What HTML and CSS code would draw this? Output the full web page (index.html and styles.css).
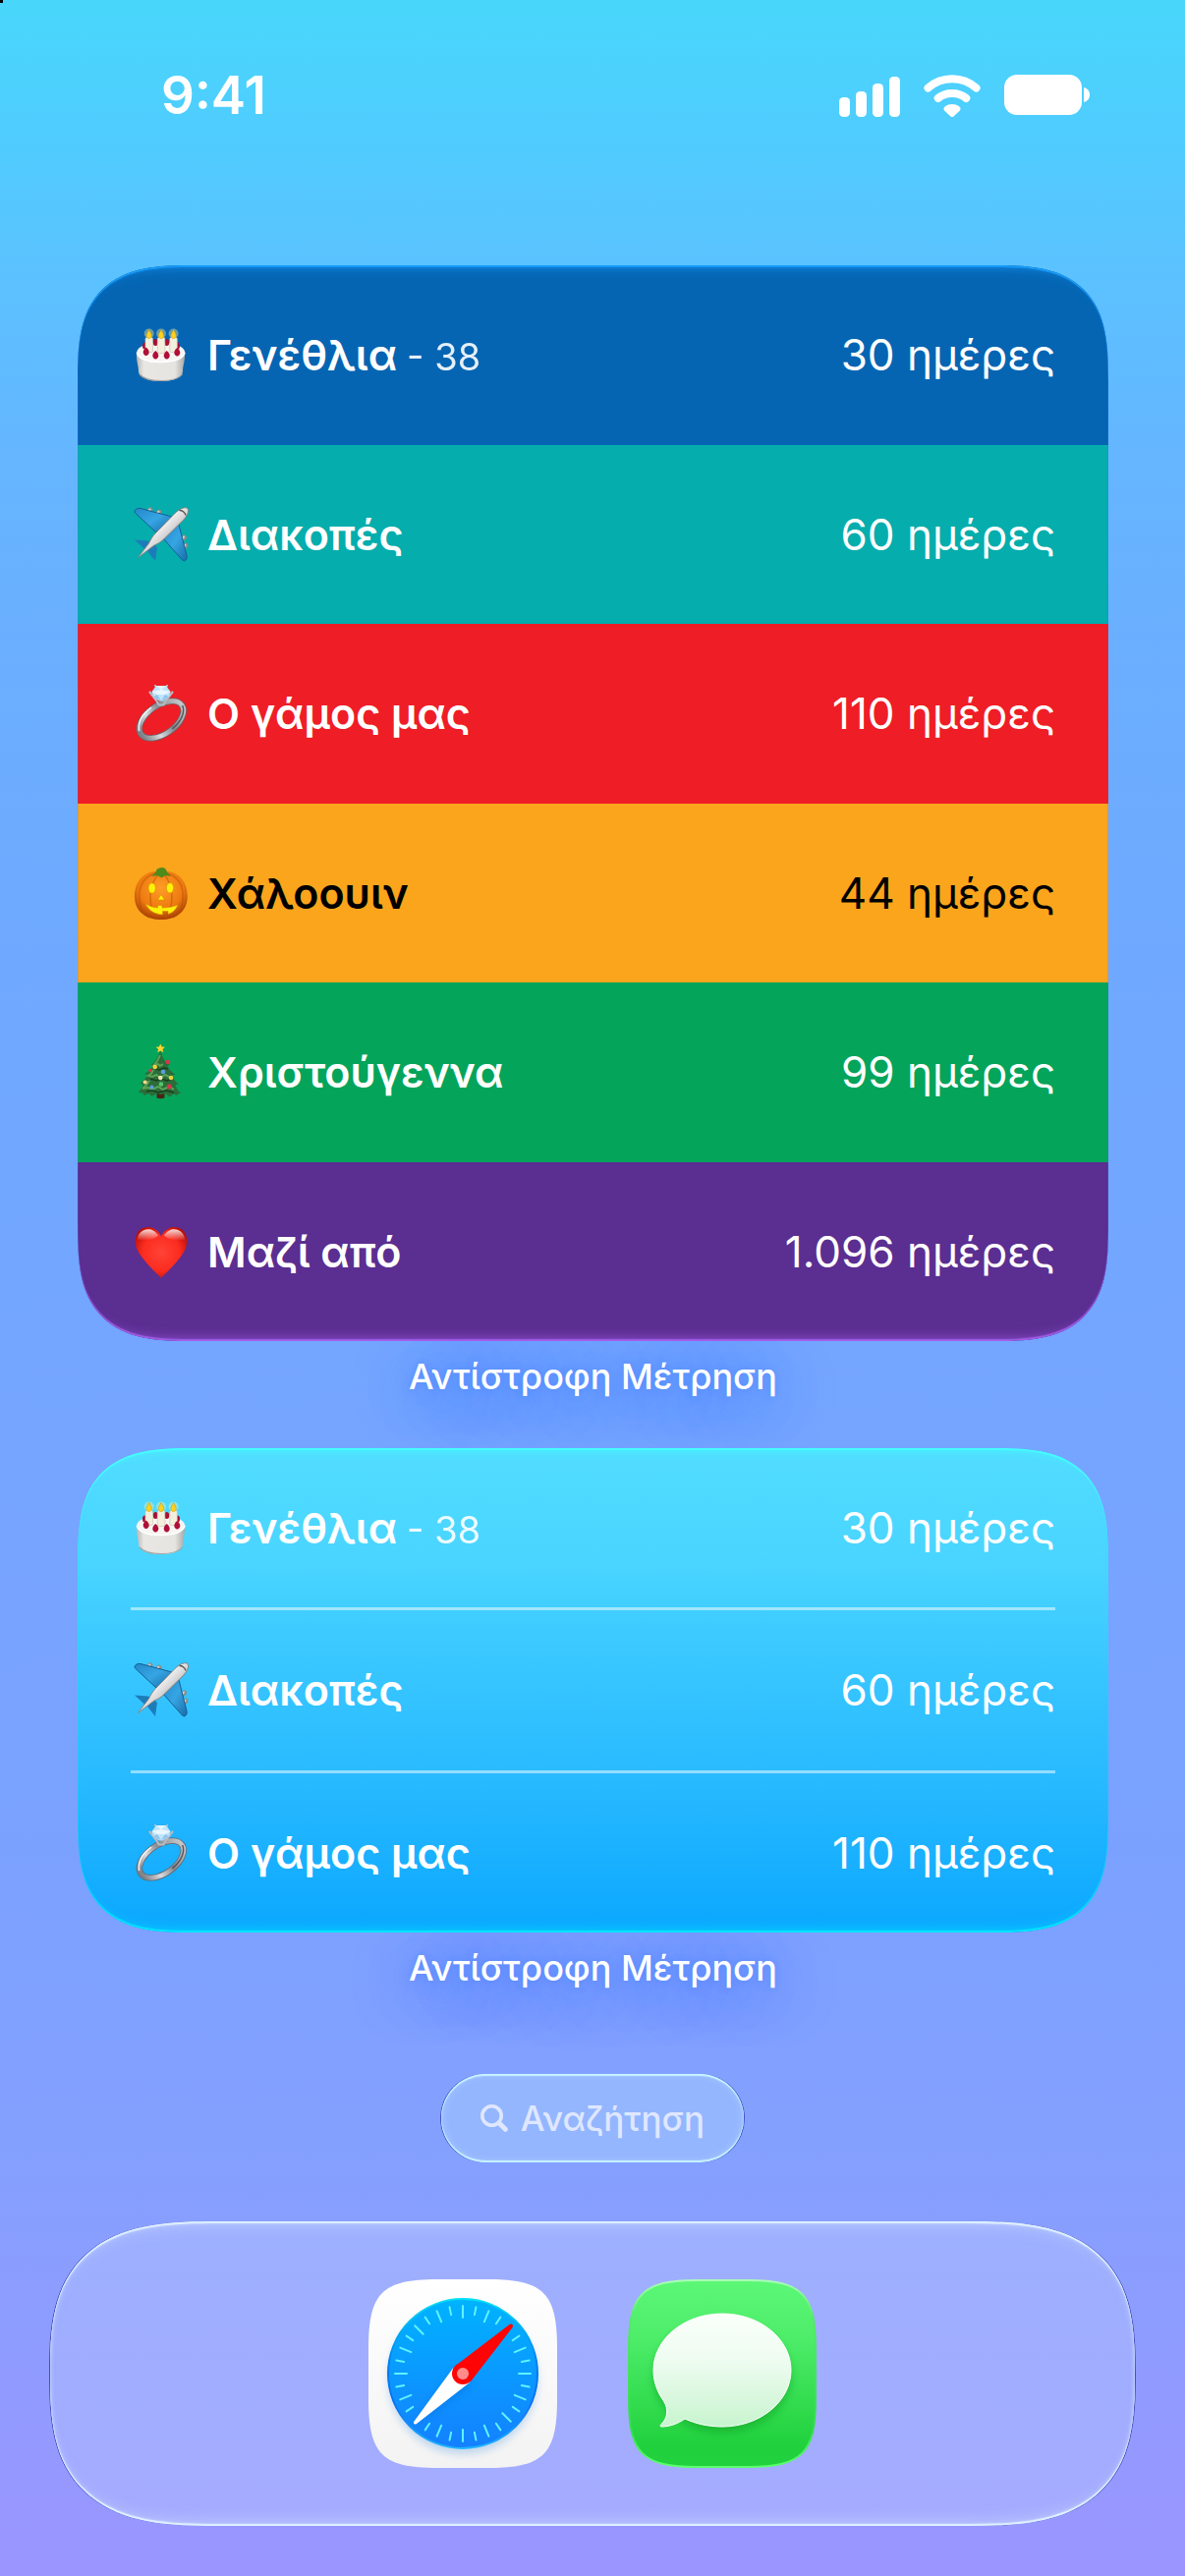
FILE: index.html
```html
<!DOCTYPE html>
<html lang="el">
<head>
    <meta charset="UTF-8">
    <meta name="viewport" content="width=device-width, initial-scale=1.0">
    <title>Αντίστροφη Μέτρηση</title>
    <link rel="stylesheet" href="styles.css">
</head>
<body>
    <!-- Emoji -->
    <svg class="sprite" aria-hidden="true">
        <defs>
            <linearGradient id="cake-side" x1="0" x2="1" y1="0" y2="0">
                <stop offset="0" stop-color="#b9b7b4"/>
                <stop offset=".15" stop-color="#e9e7e4"/>
                <stop offset=".8" stop-color="#e6e4e1"/>
                <stop offset="1" stop-color="#aaa8a5"/>
            </linearGradient>
            <linearGradient id="plane-body" x1="0" x2="1" y1="0" y2="1">
                <stop offset=".35" stop-color="#ffffff"/>
                <stop offset=".55" stop-color="#d5d3d3"/>
                <stop offset=".7" stop-color="#77716f"/>
            </linearGradient>
            <linearGradient id="plane-wing" x1="0" x2="1" y1="0" y2="1">
                <stop offset="0" stop-color="#2388c8"/>
                <stop offset=".5" stop-color="#36a5e4"/>
                <stop offset="1" stop-color="#186ca8"/>
            </linearGradient>
            <linearGradient id="ring-band" x1="0" x2="1" y1="0" y2="0">
                <stop offset="0" stop-color="#7d8086"/>
                <stop offset=".3" stop-color="#d9dbdf"/>
                <stop offset=".6" stop-color="#85878d"/>
                <stop offset="1" stop-color="#c3c5c9"/>
            </linearGradient>
            <radialGradient id="pumpkin-skin" cx=".5" cy=".35" r=".65">
                <stop offset="0" stop-color="#ff9d26"/>
                <stop offset=".65" stop-color="#ee7a10"/>
                <stop offset="1" stop-color="#a83f04"/>
            </radialGradient>
            <radialGradient id="heart-fill" cx=".5" cy=".5" r=".6">
                <stop offset="0" stop-color="#ff4336"/>
                <stop offset=".6" stop-color="#fb2c20"/>
                <stop offset="1" stop-color="#b80d06"/>
            </radialGradient>
            <linearGradient id="heart-shine" x1="0" x2="0" y1="0" y2="1">
                <stop offset="0" stop-color="#fff" stop-opacity=".85"/>
                <stop offset="1" stop-color="#fff" stop-opacity="0"/>
            </linearGradient>
        </defs>

        <symbol id="cake" viewBox="0 0 62 62">
            <path d="M6 28v4c0 7 2 10 2 16 0 6 10 10 23 10s22-4 22-10c0-6 2-9 2-16v-4z" fill="url(#cake-side)"/>
            <ellipse cx="30.700" cy="28.500" rx="24.500" ry="10" fill="#f6f5f3"/>
            <path d="M6.200 29c2 6 11 9.500 24.500 9.500S53 35 55.200 29" fill="none" stroke="#fff" stroke-width="1.500"/>
            <path d="M9 51c4 4.500 12 6.500 22 6.500S49 55.500 52.500 51" fill="none" stroke="#a5a3a0" stroke-width="1.200"/>
            <g fill="#a80f35">
                <ellipse cx="14.500" cy="22" rx="2.500" ry="3.500"/>
                <ellipse cx="25.300" cy="18.500" rx="2.500" ry="3.500"/>
                <ellipse cx="36.700" cy="18.500" rx="2.500" ry="3.500"/>
                <ellipse cx="47.500" cy="22" rx="2.500" ry="3.500"/>
            </g>
            <g fill="#f3efdc" stroke="#c9c3ac" stroke-width=".6">
                <rect x="15" y="13.500" width="7.500" height="15" rx="1.500"/>
                <rect x="27.300" y="13.500" width="7.500" height="16" rx="1.500"/>
                <rect x="39.800" y="13.500" width="7.500" height="15" rx="1.500"/>
            </g>
            <g fill="#fff3a0" opacity=".4">
                <circle cx="18.700" cy="9.500" r="5"/>
                <circle cx="31" cy="9.500" r="5"/>
                <circle cx="43.600" cy="9.500" r="5"/>
            </g>
            <g fill="#ffd21f" stroke="#d39c0b" stroke-width=".6">
                <path d="M18.700 5.500c1 2.500 2.600 4 2.600 6s-1 3-2.600 3-2.600-1-2.600-3 1.600-3.500 2.600-6z"/>
                <path d="M31 5.500c1 2.500 2.600 4 2.600 6s-1 3-2.600 3-2.600-1-2.600-3 1.600-3.500 2.600-6z"/>
                <path d="M43.600 5.500c1 2.500 2.600 4 2.600 6s-1 3-2.600 3-2.600-1-2.600-3 1.600-3.500 2.600-6z"/>
            </g>
            <g fill="#b00f38">
                <path d="M15.700 23.500c2 1.500 3 3.500 3 5s-1.200 3.500-3 3.500-3-2-3-3.500 1-3.500 3-5z"/>
                <path d="M25.300 27c2 1.500 3 3.500 3 5s-1.200 3.500-3 3.500-3-2-3-3.500 1-3.500 3-5z"/>
                <path d="M36.700 27c2 1.500 3 3.500 3 5s-1.200 3.500-3 3.500-3-2-3-3.500 1-3.500 3-5z"/>
                <path d="M47.300 24c2 1.500 3 3.500 3 5s-1.200 3.500-3 3.500-3-2-3-3.500 1-3.500 3-5z"/>
            </g>
        </symbol>

        <symbol id="plane" viewBox="0 0 62 62">
            <g stroke="#8f8a88" stroke-width="5" stroke-linecap="round">
                <path d="M18.500 7.500l1.500-1.500M27.500 9.700l1.500-1.500M53 35.500l1.500-1.500M54.500 43.700l1.500-1.500"/>
            </g>
            <g stroke="#d5d2d0" stroke-width="2" stroke-linecap="round">
                <path d="M18 7l1.500-1.500M27 9.200l1.500-1.500M52.500 35l1.500-1.500M54 43.200l1.500-1.500"/>
            </g>
            <path d="M4 36.500l14 1 4 3.500-7 5.500zM25 58l2-14-4-3.500-6 7.500z" fill="#1c7cba"/>
            <path d="M4 7.500c1-2.500 3-3.500 6-3L42 13 26 29 4.500 9z" fill="url(#plane-wing)" stroke="#145f94" stroke-width="1"/>
            <path d="M54.500 58c2.500-1 3-3 2.500-5.500L48.500 19 33 35 52.500 57z" fill="url(#plane-wing)" stroke="#145f94" stroke-width="1"/>
            <path d="M7.500 54.500L18.500 40c2-4 4-7.500 7-10.500L45 9.500c4-4 9-6.500 12-5.500s1.500 7-3 12L34 35.500c-3 3-6 5-10 6.500z" fill="url(#plane-body)" stroke="#857f7d" stroke-width=".9"/>
            <path d="M49.500 6.500c2.500-.5 6 2 6.500 5" stroke="#55504e" stroke-width="1.400" fill="none"/>
        </symbol>

        <symbol id="ring" viewBox="0 0 62 62">
            <g transform="rotate(-35 31.300 37.500)" fill="none">
                <ellipse cx="31.300" cy="37.500" rx="25.500" ry="14.500" stroke="#65676d" stroke-width="6.400"/>
                <ellipse cx="31.300" cy="37.500" rx="25.500" ry="14.500" stroke="url(#ring-band)" stroke-width="4.800"/>
                <path d="M6 34c4-8 13-12.500 24-12.500" stroke="#f3f4f6" stroke-width="1.500"/>
                <path d="M57 38c-1 7-10 12.500-22 13.500" stroke="#54565b" stroke-width="1.500"/>
            </g>
            <path d="M19.500 9.500l7 9 2 4h5l2-4 7-9M25 3l2 3M37 3l-2 3" fill="none" stroke="#b4bac2" stroke-width="2.200" stroke-linecap="round"/>
            <path d="M21.500 9l4.500-6h10l4.500 6-1.500 5-6 4.500h-4L23 14z" fill="#bfe5fb"/>
            <path d="M26 3l5 4 5-4zM21.500 9L31 7l9.500 2-5.500 3h-8z" fill="#e9f7ff"/>
            <path d="M23 14l4-2 4 6.500zM39 14l-4-2-4 6.500z" fill="#8fc4ee"/>
        </symbol>

        <symbol id="pumpkin" viewBox="0 0 62 62">
            <path d="M31 9C15 7 4 18 4 34.500 4 50 16 58 31 58s26.700-8 26.700-23.500C57.700 18 47 7 31 9z" fill="url(#pumpkin-skin)"/>
            <g fill="none" stroke="#b65206" stroke-width="1.500" opacity=".5">
                <path d="M27 10C13 14 8 24 9 37s6 17 10 19M35 10c14 4 19 14 18 27s-6 17-10 19M29 11c-6 6-9 14-9 24s3 17 7 22M33 11c6 6 9 14 9 24s-3 17-7 22"/>
            </g>
            <path d="M21 14c2-2 4-3 5-5 0-2 1-3 5-4 3 0 5 1 5.500 3.500 1 2.500 3 3.500 4.500 5.500l-6-1-3.500 2.500L27 13z" fill="#4f8a1b"/>
            <g fill="#fdf00a" stroke="#d98a04" stroke-width=".6">
                <ellipse cx="21.700" cy="26" rx="3.700" ry="5.200"/>
                <ellipse cx="40" cy="25.700" rx="3.700" ry="5.200"/>
                <path d="M31 32.500l3.500 5.500h-7z"/>
                <path d="M15 42c4 2.500 8 3.500 12.500 4v-2.500h4.500V46c6 0 11-1 16-3-2 5-5 8-10 9.500v-3h-5.500v3.500c-8-.5-14-4-17.500-11z"/>
            </g>
        </symbol>

        <symbol id="tree" viewBox="0 0 62 62">
            <path d="M26.500 50h8v7.500q-4 1.500-8 0z" fill="#4a2412"/>
            <path d="M30.300 10C27 17 25 21 21 24l2 1c-3 4-5 6-9 8l3 1c-2 4-4 6-7.500 9l3 .5C12 48 10 50 7.500 52l5 .5 1 2.500 5-2 3 3 5-3 4 1 5-1 4 3.500 4-3 4 1.500 1-2 3-.5c-4-2-5-5-6-8.500l3.500-.5c-4-3-5-5-6.500-9l3-1c-5-3-6.500-5-8-9l2.500-.5C34 21 33 17 30.300 10z" fill="#2c6c38"/>
            <path d="M30 14c-2 5-4 8-6 10l4-1 2 2 3-2M23 29c-1 3-3 5-5 6l4 1 4-2 4 3 5-3 4 2M19 40c-2 4-4 6-7 8l6-1 4 2 6-3 5 3 6-3 5 3" fill="none" stroke="#59a356" stroke-width="2"/>
            <path d="M24 27l5 2 5-2 4 1M20 38l6 2 5-2 6 2 5-2M16 51l6-1 6 2 8-2 8 2" fill="none" stroke="#173f20" stroke-width="1.500"/>
            <path d="M30.300 2.500l1.400 3 3.300.3-2.500 2.200.8 3.300-3-1.700-3 1.700.8-3.300-2.500-2.200 3.300-.3z" fill="#ffd42a"/>
            <circle cx="38" cy="21" r="2.300" fill="#d8344b"/>
            <circle cx="24.700" cy="26" r="2.300" fill="#f0d03a"/>
            <circle cx="20" cy="29.500" r="1.700" fill="#d8344b"/>
            <circle cx="33" cy="31" r="2.300" fill="#5b9de6"/>
            <circle cx="30.300" cy="37" r="2.300" fill="#efe3ad"/>
            <circle cx="41" cy="37" r="2.300" fill="#f0d03a"/>
            <circle cx="14.700" cy="41.500" r="2.100" fill="#efd98a"/>
            <circle cx="31" cy="43.500" r="2.300" fill="#57c46c"/>
            <circle cx="21.500" cy="46.500" r="1.900" fill="#5b9de6"/>
            <circle cx="39.300" cy="46" r="2.500" fill="#d8344b"/>
        </symbol>

        <symbol id="heart" viewBox="0 0 62 62">
            <path d="M31 57.700C24 51 14 41 8.500 32.500 2.500 23 4 12.500 10.500 8 18 3.500 27 6.500 31 15.500 35 6.500 44 3.500 51.500 8 58 12.500 59.500 23 53.500 32.500 48 41 38 51 31 57.700z" fill="url(#heart-fill)"/>
            <path d="M7 19C7 8.500 21 3.500 28 14.500c-3 4-14 6-21 4.500zM55 19C55 8.500 41 3.500 34 14.500c3 4 14 6 21 4.500z" fill="url(#heart-shine)"/>
        </symbol>
    </svg>

    <header class="status">
        <time class="clock">9:41</time>
        <div class="status-icons">
            <svg width="62" height="43" viewBox="0 0 62 43" fill="#fff" aria-hidden="true">
                <rect x="0" y="23" width="11" height="20" rx="4.500"/>
                <rect x="17" y="17" width="11" height="26" rx="4.500"/>
                <rect x="34" y="9" width="11" height="34" rx="4.500"/>
                <rect x="51" y="2" width="11" height="41" rx="4.500"/>
            </svg>
            <svg width="58" height="43" viewBox="0 0 58 43" aria-hidden="true">
                <path d="M4.500 13.500A37 37 0 0 1 53.500 13.500M14.700 24A23 23 0 0 1 43.300 24" fill="none" stroke="#fff" stroke-width="8" stroke-linecap="round"/>
                <path d="M29 43c-1 0-1.500-.5-2.500-1.500l-5-4.500c-1.500-1.500-1.500-3.500.5-4.700 4-3 10-3 14 0 2 1.200 2 3.200.5 4.700l-5 4.500C30.500 42.500 30 43 29 43z" fill="#fff"/>
            </svg>
            <svg width="87" height="43" viewBox="0 0 87 43" fill="#fff" aria-hidden="true">
                <rect x="0" y="0" width="79" height="41" rx="13"/>
                <path d="M81 13c4 1 6 4 6 7.500s-2 6.500-6 7.500z"/>
            </svg>
        </div>
    </header>

    <main>
        <section class="widget widget-large">
            <ul class="events">
                <li class="event blue">
                    <svg class="emoji" aria-hidden="true"><use href="#cake"/></svg>
                    <span class="name">Γενέθλια</span>
                    <span class="age">- 38</span>
                    <span class="days">30 ημέρες</span>
                </li>
                <li class="event teal">
                    <svg class="emoji" aria-hidden="true"><use href="#plane"/></svg>
                    <span class="name">Διακοπές</span>
                    <span class="days">60 ημέρες</span>
                </li>
                <li class="event red">
                    <svg class="emoji" aria-hidden="true"><use href="#ring"/></svg>
                    <span class="name">Ο γάμος μας</span>
                    <span class="days">110 ημέρες</span>
                </li>
                <li class="event orange">
                    <svg class="emoji" aria-hidden="true"><use href="#pumpkin"/></svg>
                    <span class="name">Χάλοουιν</span>
                    <span class="days">44 ημέρες</span>
                </li>
                <li class="event green">
                    <svg class="emoji" aria-hidden="true"><use href="#tree"/></svg>
                    <span class="name">Χριστούγεννα</span>
                    <span class="days">99 ημέρες</span>
                </li>
                <li class="event purple">
                    <svg class="emoji" aria-hidden="true"><use href="#heart"/></svg>
                    <span class="name">Μαζί από</span>
                    <span class="days">1.096 ημέρες</span>
                </li>
            </ul>
        </section>
        <p class="caption">Αντίστροφη Μέτρηση</p>

        <section class="widget widget-medium">
            <ul class="events">
                <li class="event">
                    <svg class="emoji" aria-hidden="true"><use href="#cake"/></svg>
                    <span class="name">Γενέθλια</span>
                    <span class="age">- 38</span>
                    <span class="days">30 ημέρες</span>
                </li>
                <li class="event">
                    <svg class="emoji" aria-hidden="true"><use href="#plane"/></svg>
                    <span class="name">Διακοπές</span>
                    <span class="days">60 ημέρες</span>
                </li>
                <li class="event">
                    <svg class="emoji" aria-hidden="true"><use href="#ring"/></svg>
                    <span class="name">Ο γάμος μας</span>
                    <span class="days">110 ημέρες</span>
                </li>
            </ul>
        </section>
        <p class="caption">Αντίστροφη Μέτρηση</p>
    </main>

    <button class="search" type="button">
        <svg width="28" height="28" viewBox="0 0 28 28" fill="none" stroke="currentColor" aria-hidden="true">
            <circle cx="11.500" cy="11.500" r="9.700" stroke-width="3.600"/>
            <path d="M19 19l6.300 6.300" stroke-width="5" stroke-linecap="round"/>
        </svg>
        Αναζήτηση
    </button>

    <nav class="dock">
        <a class="app" href="#" aria-label="Safari">
            <svg width="192" height="192" viewBox="0 0 192 192" aria-hidden="true">
                <defs>
                    <linearGradient id="safari-bg" x1="0" x2="0" y1="0" y2="1">
                        <stop offset="0" stop-color="#ffffff"/>
                        <stop offset="1" stop-color="#f3f3f3"/>
                    </linearGradient>
                    <linearGradient id="compass" x1="0" x2="0" y1="0" y2="1">
                        <stop offset="0" stop-color="#00b3ff"/>
                        <stop offset="1" stop-color="#1480ff"/>
                    </linearGradient>
                    <linearGradient id="compass-rim" x1="0" x2="0" y1="0" y2="1">
                        <stop offset="0" stop-color="#00e1f5"/>
                        <stop offset=".4" stop-color="#0080f0"/>
                        <stop offset=".7" stop-color="#0a6cf0"/>
                        <stop offset="1" stop-color="#20b8ff"/>
                    </linearGradient>
                    <filter id="soft" x="-20%" y="-20%" width="140%" height="140%">
                        <feGaussianBlur stdDeviation="4"/>
                    </filter>
                </defs>
                <path d="M70 0H122C178 0 192 14 192 70V122C192 178 178 192 122 192H70C14 192 0 178 0 122V70C0 14 14 0 70 0z" fill="url(#safari-bg)"/>
                <circle cx="96" cy="102" r="76" fill="#5a9be0" opacity=".35" filter="url(#soft)"/>
                <circle cx="96" cy="96" r="76" fill="url(#compass)" stroke="url(#compass-rim)" stroke-width="2"/>
                <g fill="none" stroke="#5ff2ff" stroke-width="2" stroke-linecap="round">
                    <g id="quarter">
                        <path d="M96 27v12"/>
                        <path d="M96 27v12" transform="rotate(22.500 96 96)"/>
                        <path d="M96 27v12" transform="rotate(67.500 96 96)"/>
                        <path d="M96 27v8" transform="rotate(11.250 96 96)"/>
                        <path d="M96 27v8" transform="rotate(33.750 96 96)"/>
                        <path d="M96 27v8" transform="rotate(56.250 96 96)"/>
                        <path d="M96 27v8" transform="rotate(78.750 96 96)"/>
                    </g>
                    <use href="#quarter" transform="rotate(90 96 96)"/>
                    <use href="#quarter" transform="rotate(180 96 96)"/>
                    <use href="#quarter" transform="rotate(270 96 96)"/>
                    <path d="M96 27v12" transform="rotate(135 96 96)"/>
                    <path d="M96 27v12" transform="rotate(315 96 96)"/>
                </g>
                <path d="M88 92L46 150l58-42z" fill="#0050c0" opacity=".3" filter="url(#soft)"/>
                <path d="M86 90.500L46.500 144.500c-1.500 2.500.5 4 2.500 2.500L103 105z" fill="#fff"/>
                <path d="M88.500 88L143.500 46c2-1.500 4.500.5 3 3L104 104z" fill="#ff0404"/>
                <circle cx="96" cy="96" r="11" fill="#ff0404"/>
                <circle cx="96" cy="96" r="6" fill="#ff8b8b"/>
            </svg>
        </a>
        <a class="app" href="#" aria-label="Μηνύματα">
            <svg width="192" height="192" viewBox="0 0 192 192" aria-hidden="true">
                <defs>
                    <linearGradient id="messages-bg" x1="0" x2="0" y1="0" y2="1">
                        <stop offset="0" stop-color="#5cf777"/>
                        <stop offset=".3" stop-color="#4eed6a"/>
                        <stop offset=".9" stop-color="#20d03c"/>
                        <stop offset="1" stop-color="#22d13e"/>
                    </linearGradient>
                    <linearGradient id="messages-rim" x1="0" x2="0" y1="0" y2="1">
                        <stop offset="0" stop-color="#a8ffb4"/>
                        <stop offset=".2" stop-color="#55ea68"/>
                        <stop offset=".8" stop-color="#35dc50"/>
                        <stop offset="1" stop-color="#5cff70"/>
                    </linearGradient>
                    <linearGradient id="bubble" x1="0" x2="0" y1="0" y2="1">
                        <stop offset="0" stop-color="#fafffa"/>
                        <stop offset=".4" stop-color="#effcf1"/>
                        <stop offset="1" stop-color="#c8f4cf"/>
                    </linearGradient>
                </defs>
                <path d="M70 1H122C177 1 191 15 191 70V122C191 177 177 191 122 191H70C15 191 1 177 1 122V70C1 15 15 1 70 1z" fill="url(#messages-bg)" stroke="url(#messages-rim)" stroke-width="2"/>
                <ellipse cx="96" cy="99" rx="70" ry="57" fill="#089a20" opacity=".5" filter="url(#soft)"/>
                <path d="M96 35C135 35 166 61 166 92.500S135 150 96 150C82 150 69 147 58 142C51 147 42 150 34 150C32.500 149.500 33 148.500 34 147.500C40 142 42 133 36.500 124C30 115 26 104 26 92.500C26 61 57 35 96 35z" fill="url(#bubble)" stroke="#fff" stroke-width="1"/>
            </svg>
        </a>
    </nav>
</body>
</html>
```
FILE: styles.css
```css
* {
    margin: 0;
    padding: 0;
}
body {
    display: flex;
    flex-direction: column;
    min-height: 100vh;
    font-family: Inter, "Noto Sans", sans-serif;
    font-size: 44px;
    color: #fff;
    background:
        linear-gradient(#000, #000) 0 0 / 3px 3px no-repeat,
        linear-gradient(#48d7fb 0%, #4fcdfe 5%, #5cc1ff 11%, #65b5ff 18%, #6baeff 26%, #70a8ff 40%, #75a5ff 56%, #7ba1ff 72%, #85a0ff 84%, #9499ff 95%, #9b95ff 100%);
}
.sprite {
    position: absolute;
    width: 0;
    height: 0;
}

/* Status bar */
.status {
    display: flex;
    justify-content: space-between;
    align-items: center;
    padding: 71px 97px 147px 164px;
}
.clock {
    font-size: 53px;
    line-height: 52px;
    font-weight: 600;
}
.status-icons {
    display: flex;
    gap: 24px;
}

/* Widgets */
main {
    padding: 0 78px 0 79px;
}
.widget {
    position: relative;
    display: flex;
    overflow: hidden;
    border-radius: 88px;
}
.widget::after {
    content: "";
    position: absolute;
    inset: 0;
    border-radius: inherit;
    pointer-events: none;
    box-shadow:
        inset 0 2px 1px var(--top-edge),
        inset 0 -2px 1px var(--bottom-edge),
        inset 0 14px 14px -14px var(--top-edge),
        inset 0 -14px 14px -14px var(--bottom-edge);
}
.widget-large {
    --top-edge: #189cfa;
    --bottom-edge: #a25ce8;
    min-height: 1095px;
}
.widget-medium {
    --top-edge: #44fdff;
    --bottom-edge: #00e6ff;
    min-height: 493px;
    background: linear-gradient(#52dcff, #48d4ff 25%, #3ac8ff 42%, #27b9ff 70%, #0ba7ff);
}
.events {
    display: flex;
    flex-direction: column;
    flex: 1;
    list-style: none;
}
.event {
    flex: 1;
    display: flex;
    align-items: center;
    line-height: 60px;
}
.widget-large .event {
    padding: 0 54px;
}
.widget-medium .event {
    margin: 0 54px;
}
.widget-medium .event + .event {
    border-top: 3px solid rgba(255, 255, 255, 0.5);
}
.emoji {
    width: 62px;
    height: 62px;
    margin-right: 16px;
}
.name {
    font-size: 43px;
    font-weight: 600;
}
.age {
    margin: 4px 0 0 10px;
    font-size: 38px;
    opacity: 0.9;
}
.days {
    margin-left: auto;
}
.blue { background: #0565b3; }
.teal { background: #05adad; }
.red { background: #ef1d25; }
.orange { background: #faa51c; color: #000; }
.green { background: #05a45b; }
.purple { background: #5b2e91; }

.caption {
    margin: 14px 0 51px;
    font-size: 36px;
    line-height: 44px;
    font-weight: 500;
    text-align: center;
    text-shadow: 0 0 6px rgba(70, 130, 255, 0.5), 0 8px 40px rgba(60, 125, 255, 0.7), 0 8px 60px rgba(70, 130, 255, 0.5);
}

/* Search */
.search {
    display: flex;
    align-items: center;
    gap: 13px;
    align-self: center;
    margin-top: 35px;
    padding: 23px 40px;
    border: 0;
    border-radius: 45px;
    font-family: inherit;
    font-size: 35px;
    line-height: 44px;
    font-weight: 500;
    color: #dfe7ff;
    background: rgba(163, 203, 255, 0.5);
    box-shadow:
        1px 0 0 #4254c0,
        -1px 0 0 #4254c0,
        inset 0 2px 1px #c8f4ff,
        inset 0 -2px 1px #c8f4ff,
        inset 0 0 8px rgba(180, 215, 255, 0.8);
}

/* Dock */
.dock {
    display: flex;
    justify-content: center;
    gap: 72px;
    margin: 60px 51px 51px;
    padding: 59px;
    border-radius: 130px;
    background: rgba(178, 192, 255, 0.5);
    box-shadow:
        1px 0 0 #4850b8,
        -1px 0 0 #4850b8,
        inset 0 2px 1px #e0f2ff,
        inset 0 -2px 1px #e0f2ff,
        inset 0 0 4px 1px rgba(205, 222, 255, 0.6),
        inset 0 16px 18px -14px rgba(200, 215, 255, 0.8),
        inset 0 -16px 18px -14px rgba(200, 215, 255, 0.8);
}
.app,
.app svg {
    display: block;
}

/* Smoother continuous corners where the browser draws them */
@supports (corner-shape: squircle) {
    .widget,
    .widget::after {
        border-radius: 118px;
        corner-shape: superellipse(1.55);
    }
    .dock {
        border-radius: 170px / 155px;
        corner-shape: superellipse(1.5);
    }
}
```
